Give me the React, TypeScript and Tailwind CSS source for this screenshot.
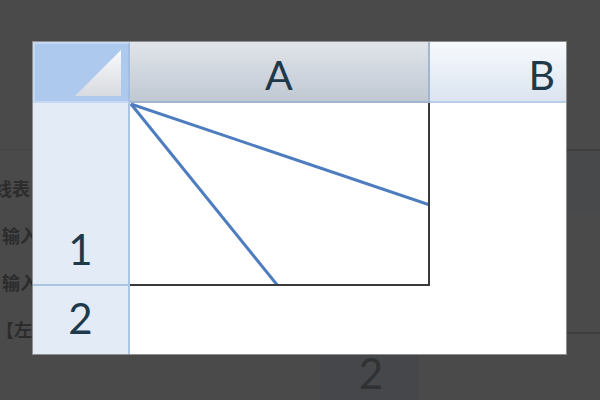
import React from 'react';

// zoomed-in excel snippet over a dimmed page
const font = {fontFamily: 'Lato, "Open Sans", sans-serif'};

const Diagonals: React.FC = () => (
  <svg width="300" height="183" viewBox="0 0 300 183" className="block">
    <line x1="1" y1="1" x2="300" y2="102" stroke="#4d7dbf" strokeWidth="3" />
    <line x1="1" y1="1" x2="148" y2="183" stroke="#4d7dbf" strokeWidth="3" />
  </svg>
);

const Corner: React.FC = () => (
  <svg width="48" height="48" viewBox="0 0 48 48" className="block">
    <defs>
      <linearGradient id="tri" x1="0" y1="0" x2="0" y2="1">
        <stop offset="0" stopColor="#fafafb" />
        <stop offset="1" stopColor="#d7dae0" />
      </linearGradient>
    </defs>
    <polygon points="46,0 46,46 0,46" fill="url(#tri)" />
  </svg>
);

export default function App() {
  return (
    <div className="relative w-[600px] h-[400px] overflow-hidden bg-[#4a4a4a]" style={font}>
      {/* page behind the popup */}
      <div className="flex h-full">
        <div className="w-[320px] flex flex-col pt-[149px]">
          <div className="h-[1px] bg-[#444444]" />
          <div
            className="flex flex-col mt-[26px] gap-[23px] text-[18px] font-bold text-[#2c2c2c] leading-[24px]"
            style={{fontFamily: '"Noto Sans CJK SC", sans-serif'}}
          >
            <div className="-ml-[6px]">线表</div>
            <div className="ml-[2px]">输入文字</div>
            <div className="ml-[2px]">输入文字</div>
            <div className="-ml-[4px]">【左</div>
          </div>
        </div>
        <div className="w-[98px] flex flex-col justify-end">
          <div className="h-[48px] bg-[#46474a] flex items-start justify-center pl-[4px] text-[42px] leading-[42px] text-[#2f3133]">2</div>
        </div>
        <div className="flex-1 flex flex-col pt-[149px]">
          <div className="h-[2px] bg-[#3e3e3e]" />
          <div className="h-[62px] bg-[#47494b]" />
          <div className="h-[119px]" />
          <div className="h-[2px] bg-[#3e3e3e]" />
        </div>
      </div>

      {/* zoom popup */}
      <div className="absolute left-[32px] top-[41px] w-[535px] border border-[#8e8e8e] bg-white">
        <div className="grid grid-cols-[97px_300px_136px] grid-rows-[61px_183px_68px] text-[#1e3a4a]">
          {/* header row */}
          <div className="bg-[#adc9ee] border-[2px] border-[#c6d9f2] border-r-[#a3bedf] flex items-end justify-end pr-[5px] pb-[3px]">
            <Corner />
          </div>
          <div className="bg-gradient-to-b from-[#e1e5ea] to-[#c0c8d3] border-b-[2px] border-r-[2px] border-[#a2b7cf] flex items-center justify-center text-[41px] pt-[6px]">
            A
          </div>
          <div className="bg-gradient-to-b from-[#f7fafd] to-[#dbe4f0] border-b-[2px] border-[#b9cde6] flex items-center justify-end pr-[11px] text-[41px] pt-[6px]">
            B
          </div>

          {/* row 1 */}
          <div className="bg-[#e3ebf6] border-r-[2px] border-b-[2px] border-[#aac4e2] flex items-end justify-center text-[42px] leading-none pb-[14px]">
            1
          </div>
          <div className="border-r-[2px] border-b-[2px] border-[#3a3a3a] overflow-hidden">
            <Diagonals />
          </div>
          <div className="bg-white" />

          {/* row 2 */}
          <div className="bg-[#e3ebf6] border-r-[2px] border-[#aac4e2] flex items-center justify-center text-[42px] leading-none pb-[4px]">
            2
          </div>
          <div className="bg-white" />
          <div className="bg-white" />
        </div>
      </div>
    </div>
  );
}
